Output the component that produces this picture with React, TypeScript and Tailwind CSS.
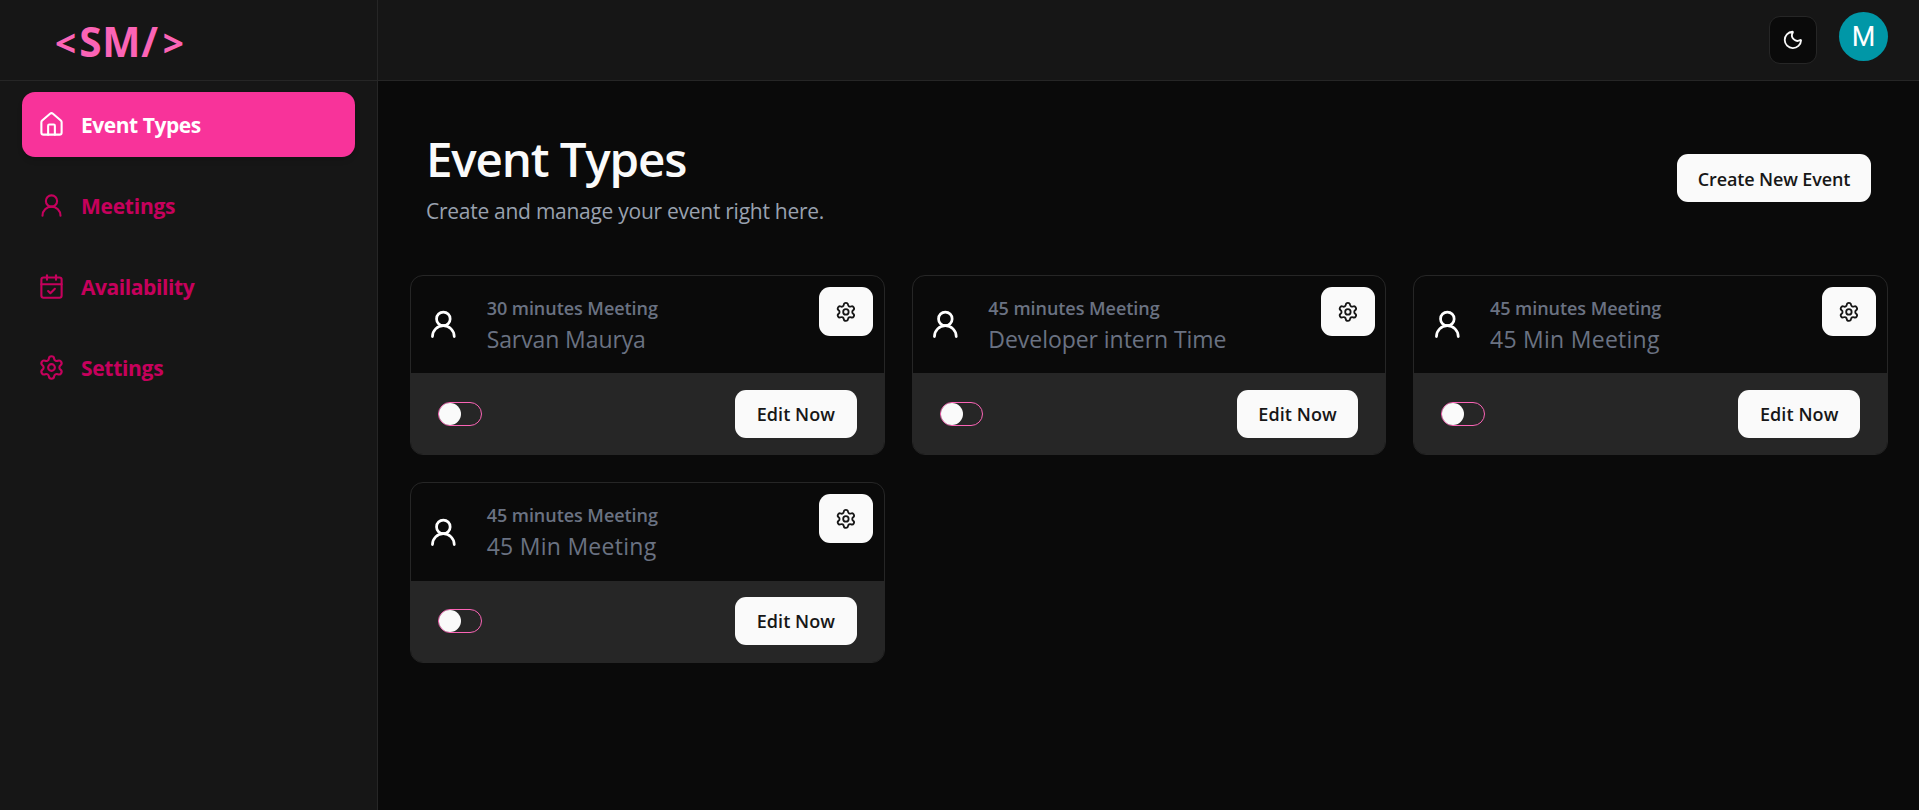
import { CalendarCheck, House, Moon, Settings, UserRound, type LucideIcon } from 'lucide-react';

type NavItem = { label: string; icon: LucideIcon; tracking: string; active?: boolean };

const navItems: NavItem[] = [
  { label: 'Event Types', icon: House, tracking: 'tracking-[-0.45px]', active: true },
  { label: 'Meetings', icon: UserRound, tracking: 'tracking-[-0.25px]' },
  { label: 'Availability', icon: CalendarCheck, tracking: 'tracking-[-0.42px]' },
  { label: 'Settings', icon: Settings, tracking: 'tracking-[-0.3px]' },
];

type EventType = { duration: number; title: string; tracking: string };

const events: EventType[] = [
  { duration: 30, title: 'Sarvan Maurya', tracking: 'tracking-[-0.1px]' },
  { duration: 45, title: 'Developer intern Time', tracking: 'tracking-[-0.05px]' },
  { duration: 45, title: '45 Min Meeting', tracking: 'tracking-[0.27px]' },
  { duration: 45, title: '45 Min Meeting', tracking: 'tracking-[0.27px]' },
];

function Sidebar() {
  return (
    <aside className="flex w-[378px] shrink-0 flex-col border-r border-neutral-800 bg-[#161616]">
      <div className="flex h-[81px] items-center border-b border-neutral-800 pt-[5px] pl-[55px] font-bold text-pink-400">
        <div className="flex items-baseline leading-none">
          <span className="text-[37px] tracking-[3px]">{'<'}</span>
          <span className="text-[40.5px] tracking-[0.8px]">SM/</span>
          <span className="ml-1 text-[37px]">{'>'}</span>
        </div>
      </div>
      <nav className="flex flex-col gap-4 px-[22px] pt-[11px]">
        {navItems.map(({ label, icon: Icon, tracking, active }) => (
          <a
            key={label}
            className={`flex h-[65px] items-center gap-4 rounded-[13px] pl-4 ${
              active ? 'bg-[#f8339a] text-white shadow-md' : 'text-pink-700'
            }`}
          >
            <Icon className="size-[27px]" strokeWidth={1.85} />
            <span className={`text-[21px] leading-8 font-bold ${tracking}`}>{label}</span>
          </a>
        ))}
      </nav>
    </aside>
  );
}

function TopBar() {
  return (
    <header className="flex h-[81px] items-start justify-end gap-[22px] border-b border-neutral-800 bg-[#161616] pt-3 pr-[31px]">
      <button className="mt-1 flex size-12 items-center justify-center rounded-[11px] border border-neutral-800 bg-neutral-950 text-neutral-50">
        <Moon className="size-[21.8px]" />
      </button>
      <span className="flex size-[49px] items-center justify-center rounded-full bg-[#0097a7] pt-px font-[Roboto,sans-serif] text-[27px] leading-none text-white">
        M
      </span>
    </header>
  );
}

function EventCard({ duration, title, tracking }: EventType) {
  return (
    <article className="flex h-[180.3px] flex-col overflow-hidden rounded-[13px] border border-neutral-800">
      <div className="relative flex h-[97.4px] shrink-0 items-center pl-[16.2px]">
        <UserRound className="size-[32.7px] text-white" />
        <div className="ml-[26.8px] flex flex-col text-gray-500">
          <span className="pt-0.5 text-[18px] leading-[27px] font-semibold tracking-[-0.05px]">{duration} minutes Meeting</span>
          <span className={`text-[23px] leading-[34px] ${tracking}`}>{title}</span>
        </div>
        <button className="absolute top-[11px] right-[10.8px] flex h-[49px] w-[54px] items-center justify-center rounded-[11px] bg-neutral-50 text-neutral-900">
          <Settings className="size-[21.8px]" />
        </button>
      </div>
      <div className="flex flex-1 items-center justify-between bg-neutral-800 px-[27px]">
        <button role="switch" aria-checked="false" aria-label={title} className="flex h-6 w-[43.5px] items-center rounded-full border border-pink-400">
          <span className="size-[22px] rounded-full bg-neutral-50" />
        </button>
        <button className="h-12 w-[121.6px] rounded-[11px] bg-neutral-50 text-[18px] leading-7 font-semibold tracking-[0.08px] text-neutral-900">
          Edit Now
        </button>
      </div>
    </article>
  );
}

export default function App() {
  return (
    <div className="flex h-screen overflow-hidden bg-neutral-950 font-['Open_Sans','Noto_Sans',sans-serif]">
      <Sidebar />
      <div className="flex min-w-0 flex-1 flex-col">
        <TopBar />
        <main className="pr-[31px] pl-8">
          <div className="flex items-start justify-between pt-[50px] pr-[17px] pl-4">
            <div>
              <h1 className="text-[47.5px] leading-[56px] font-semibold tracking-[-1.15px] text-neutral-50">Event Types</h1>
              <p className="mt-2 text-[21px] leading-8 tracking-[-0.27px] text-gray-400">
                Create and manage your event right here.
              </p>
            </div>
            <button className="mt-[23px] h-12 w-[194px] rounded-[11px] bg-neutral-50 pt-px text-[18px] leading-7 font-semibold tracking-[-0.14px] text-neutral-900">
              Create New Event
            </button>
          </div>
          <section className="mt-12 grid grid-cols-3 gap-[27px]">
            {events.map((event, i) => (
              <EventCard key={i} {...event} />
            ))}
          </section>
        </main>
      </div>
    </div>
  );
}
